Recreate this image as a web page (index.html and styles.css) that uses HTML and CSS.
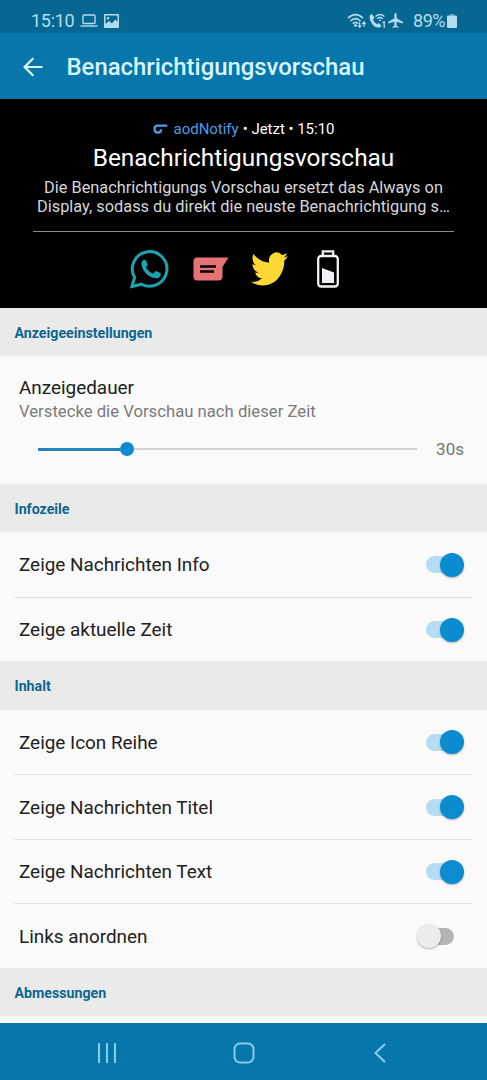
FILE: index.html
```html
<!DOCTYPE html>
<html lang="de">

<head>
    <meta charset="UTF-8">
    <meta name="viewport" content="width=device-width, initial-scale=1.0">
    <title>Benachrichtigungsvorschau</title>
    <link rel="stylesheet" href="styles.css">
</head>

<body>
    <div class="statusbar">
        <span class="clock">15:10</span>
        <svg class="laptop" width="18" height="14" viewBox="0 0 18 14" fill="none" stroke="currentColor" stroke-width="1.4">
            <rect x="3" y="1" width="12" height="8.5" rx="1" />
            <path d="M0.5 12h17" />
        </svg>
        <svg class="picture" width="15" height="14" viewBox="0 0 15 14">
            <path fill="currentColor" fill-rule="evenodd" d="M1 0h13q1 0 1 1v12q0 1-1 1H1q-1 0-1-1V1q0-1 1-1zM1.5 1.5v8.5l3.5-3 3 2.5 3.2-4 2.3 2V1.5zM4 3a1.3 1.3 0 1 1 0 2.6a1.3 1.3 0 0 1 0-2.6z" />
        </svg>
        <div class="status-right">
            <svg width="20" height="16" viewBox="0 0 20 16" fill="none" stroke="currentColor" stroke-width="1.6">
                <path d="M1 5.2Q8.5-1.8 16 5.2M3.4 8Q8.5 3.2 13.6 8M5.8 10.7Q8.5 8.2 11.2 10.7" />
                <path d="M8.5 11l2 1.2-2 2-2-2z" fill="currentColor" stroke="none" />
                <path d="M12.6 9v5M11 12.3l1.6 1.9 1.6-1.9M17 14V9.2M15.3 11l1.7-2 1.7 2" stroke-width="1.2" />
            </svg>
            <svg class="call" width="17" height="16" viewBox="0 0 17 16" fill="none" stroke="currentColor">
                <path d="M1 2.2L3 1l2.6 3.7-1.7 1.6q1 3.6 4.3 5l1.8-1.2 2.5 2.8-1.8 1.5Q6.5 15.3 3 10.7T1 2.2z" fill="currentColor" stroke="none" />
                <path d="M6.5 3.5q4.5-4 9 0M8.2 5.7q2.8-2.4 5.6 0M10 7.6q1-.8 2 0" stroke-width="1.3" />
                <path d="M13.5 9.8l1.7-.9V15" stroke-width="1.3" />
            </svg>
            <svg class="plane" width="15" height="15" viewBox="2 2 20 20">
                <path fill="currentColor" d="M22 16v-2l-8.5-5V3.5C13.5 2.7 12.8 2 12 2s-1.5.7-1.5 1.5V9L2 14v2l8.5-2.5V19L8 20.5V22l4-1 4 1v-1.5L13.5 19v-5.5z" />
            </svg>
            <span class="percent">89%</span>
            <svg class="cell" width="10" height="14" viewBox="0 0 10 14" fill="currentColor">
                <path d="M3 0h4v1.5H3z" opacity=".6" />
                <rect y="1.5" width="10" height="12.5" rx="1" />
            </svg>
        </div>
    </div>

    <header class="toolbar">
        <svg width="20" height="20" viewBox="0 0 20 20" fill="none" stroke="currentColor" stroke-width="2.2">
            <path d="M19.5 10H2M10.3 1.3L1.6 10l8.7 8.7" />
        </svg>
        <h1>Benachrichtigungsvorschau</h1>
    </header>

    <section class="preview">
        <div class="meta">
            <svg width="15" height="11" viewBox="0 0 15 11" fill="none" stroke="currentColor" stroke-width="2.3">
                <path d="M14.3 1.6H4.5Q1.5 1.6 1.5 5q0 3.600 3.400 3.600 3.200 0 3.200-3.400" />
            </svg>
            <span class="app">aodNotify</span>
            <span class="info">• Jetzt • 15:10</span>
        </div>
        <h2>Benachrichtigungsvorschau</h2>
        <p>Die Benachrichtigungs Vorschau ersetzt das Always on<br>Display, sodass du direkt die neuste Benachrichtigung s…</p>
        <div class="icons">
            <svg width="40" height="40" viewBox="0 0 40 40">
                <path d="M2 37.5L4.6 28.5A17.3 17.3 0 1 1 11.5 35.2z" fill="none" stroke="#1ba3b2" stroke-width="3" />
                <path d="M11.5 14q.3-2.8 2.5-3.3 1.6-.1 2.1 1.2l1.5 3.5q.2 1.1-1.7 2.9 2.7 4.8 7.3 6.5l2-2.3q.8-.7 1.6-.2l3.4 1.7q1 .6.5 2.2-1.2 3.3-5 3.1-5.6-.4-10.4-5.6-3.900-4.500-3.800-9.700z" fill="#1ba3b2" />
            </svg>
            <svg width="36" height="24" viewBox="0 0 36 24">
                <path d="M4 .5h31.500L29.5 10v9.500q0 4-4 4H4q-3.500 0-3.500-4V4.500Q.5.500 4 .5z" fill="#e57373" />
                <path d="M7 9.500h16M7 14.500h14" stroke="#000" stroke-width="2.300" />
            </svg>
            <svg width="37" height="34" viewBox="0 2 24 20" preserveAspectRatio="none">
                <path fill="#fdd835" d="M23.950 4.570a10 10 0 0 1-2.820.77 4.960 4.960 0 0 0 2.160-2.720c-.95.550-2 .950-3.130 1.180a4.920 4.920 0 0 0-8.380 4.480C7.690 8.090 4.070 6.130 1.640 3.160a4.820 4.820 0 0 0-.670 2.480c0 1.710.870 3.210 2.190 4.100a4.900 4.900 0 0 1-2.230-.620v.060a4.920 4.920 0 0 0 3.950 4.830 5 5 0 0 1-2.210.080 4.940 4.940 0 0 0 4.600 3.420A9.870 9.870 0 0 1 0 19.540a13.990 13.990 0 0 0 7.560 2.210c9.050 0 14-7.500 14-13.980 0-.210 0-.420-.020-.630a9.940 9.940 0 0 0 2.410-2.570z" />
            </svg>
            <svg width="22" height="38" viewBox="0 0 22 38">
                <rect x="1.2" y="6" width="19.6" height="30.5" rx="3" fill="none" stroke="#f1f1f5" stroke-width="2.3" />
                <path d="M5.8 5.5V1.3h10.400v4.200" fill="none" stroke="#f1f1f5" stroke-width="2.300" />
                <path d="M5 18l12 4.500v10.500H5z" fill="#f1f1f5" />
            </svg>
        </div>
    </section>

    <main>
        <h3 class="section">Anzeigeeinstellungen</h3>
        <div class="duration">
            <div class="label">Anzeigedauer</div>
            <div class="summary">Verstecke die Vorschau nach dieser Zeit</div>
            <div class="slider">
                <div class="track">
                    <div class="fill"></div>
                    <div class="thumb"></div>
                </div>
                <span class="value">30s</span>
            </div>
        </div>

        <h3 class="section">Infozeile</h3>
        <div class="rows">
            <div class="row"><span class="label">Zeige Nachrichten Info</span><span class="switch on"></span></div>
            <div class="row"><span class="label">Zeige aktuelle Zeit</span><span class="switch on"></span></div>
        </div>

        <h3 class="section">Inhalt</h3>
        <div class="rows">
            <div class="row"><span class="label">Zeige Icon Reihe</span><span class="switch on"></span></div>
            <div class="row"><span class="label">Zeige Nachrichten Titel</span><span class="switch on"></span></div>
            <div class="row"><span class="label">Zeige Nachrichten Text</span><span class="switch on"></span></div>
            <div class="row"><span class="label">Links anordnen</span><span class="switch"></span></div>
        </div>

        <h3 class="section">Abmessungen</h3>
    </main>

    <nav class="navbar">
        <svg width="20" height="20" viewBox="0 0 20 20" fill="none" stroke="currentColor" stroke-width="2">
            <path d="M2 0v20M10 0v20M18 0v20" />
        </svg>
        <svg width="22" height="22" viewBox="0 0 22 22" fill="none" stroke="currentColor" stroke-width="2">
            <rect x="1.5" y="1.5" width="19" height="19" rx="5.5" />
        </svg>
        <svg width="20" height="20" viewBox="0 0 20 20" fill="none" stroke="currentColor" stroke-width="2">
            <path d="M15 1L5.5 10l9.500 9" />
        </svg>
    </nav>
</body>

</html>
```
FILE: styles.css
```css
* {
    box-sizing: border-box;
}

body {
    margin: 0;
    display: flex;
    flex-direction: column;
    width: 487px;
    height: 1080px;
    overflow: hidden;
    background: #fafafa;
    color: #212121;
    font-family: Roboto, sans-serif;
}

h1,
h2,
h3,
p {
    margin: 0;
    white-space: nowrap;
}

svg {
    display: block;
    flex: none;
}

.statusbar {
    display: flex;
    align-items: center;
    flex: none;
    height: 33px;
    padding: 8px 30px 0 31px;
    background: #066892;
    color: #b3dcee;
    font-size: 18px;
    line-height: 24px;
}

.clock {
    width: 49px;
    letter-spacing: -0.3px;
}

.picture {
    margin-left: 6px;
}

.status-right {
    display: flex;
    align-items: center;
    margin-left: auto;
}

.status-right .call {
    margin-left: 2px;
}

.status-right .plane {
    margin-left: 2px;
}

.percent {
    margin: 0 2px 0 10px;
    letter-spacing: -0.5px;
}

.toolbar {
    display: flex;
    align-items: center;
    flex: none;
    gap: 23.5px;
    height: 66px;
    padding: 2px 23px 0;
    background: #0777ab;
    color: #d9f5ff;
}

.toolbar h1 {
    font-size: 23.9px;
    font-weight: 500;
}

.preview {
    display: flex;
    flex-direction: column;
    align-items: center;
    flex: none;
    height: 209px;
    padding-top: 20px;
    background: #000;
    color: #fff;
}

.meta {
    display: flex;
    align-items: center;
    height: 20px;
    font-size: 15px;
    letter-spacing: -0.02px;
}

.app {
    margin: 0 4px 0 6px;
    color: #4f9be6;
}

.meta svg {
    color: #4f9be6;
}

.preview h2 {
    height: 39px;
    font-size: 24.4px;
    font-weight: 400;
    line-height: 38px;
}

.preview p {
    color: #d6d6d6;
    font-size: 16.35px;
    line-height: 19px;
    text-align: center;
}

.icons {
    display: grid;
    grid-template-columns: 60px 61px 56px 62px;
    place-items: center;
    width: 421px;
    height: 74px;
    margin-top: 15px;
    padding-right: 8px;
    justify-content: center;
    border-top: 1px solid #8a8a8a;
}

main {
    flex: 1;
    min-height: 0;
    overflow: hidden;
}

.section {
    height: 48px;
    padding: 1px 14.5px 0;
    background: #eaeaea;
    color: #0b6690;
    font-size: 14.2px;
    font-weight: 700;
    line-height: 48px;
}

.rows + .section {
    height: 48.5px;
}

.label {
    font-size: 18.9px;
}

.duration {
    height: 128px;
    padding: 19px 19px 0;
}

.duration .label {
    line-height: 25px;
}

.summary {
    color: #7a7a7a;
    font-size: 16.7px;
    line-height: 24px;
}

.slider {
    display: flex;
    align-items: center;
    justify-content: space-between;
    height: 50px;
    padding: 0 4px 0 19px;
}

.track {
    display: flex;
    align-items: center;
    width: 379px;
    height: 2px;
    background: #d3d3d3;
}

.fill {
    width: 82px;
    height: 3px;
    background: #2385b9;
}

.thumb {
    flex: none;
    width: 14px;
    height: 14px;
    border-radius: 50%;
    background: #0b8bd0;
}

.value {
    color: #757575;
    font-size: 17px;
}

.rows {
    padding: 0 14px;
}

.row {
    display: flex;
    align-items: center;
    justify-content: space-between;
    height: 64.5px;
    padding: 1px 9px 0 5px;
}

.row + .row {
    border-top: 1px solid #e1e1e1;
}

.switch {
    display: flex;
    align-items: center;
    width: 28px;
    height: 17px;
    margin-right: 10px;
    border-radius: 9px;
    background: #b4b4b4;
}

.switch::before {
    content: '';
    flex: none;
    width: 24px;
    height: 24px;
    margin-left: -9px;
    border-radius: 50%;
    background: #ececec;
    box-shadow: 0 1px 2px rgba(0, 0, 0, 0.3);
}

.switch.on {
    background: #b5dcf0;
}

.switch.on::before {
    margin-left: 14px;
    background: #0b8bd0;
}

.navbar {
    display: flex;
    align-items: center;
    justify-content: space-between;
    flex: none;
    height: 57px;
    padding: 3px 97px 0;
    background: #0777ab;
    color: #86cdee;
}
```
